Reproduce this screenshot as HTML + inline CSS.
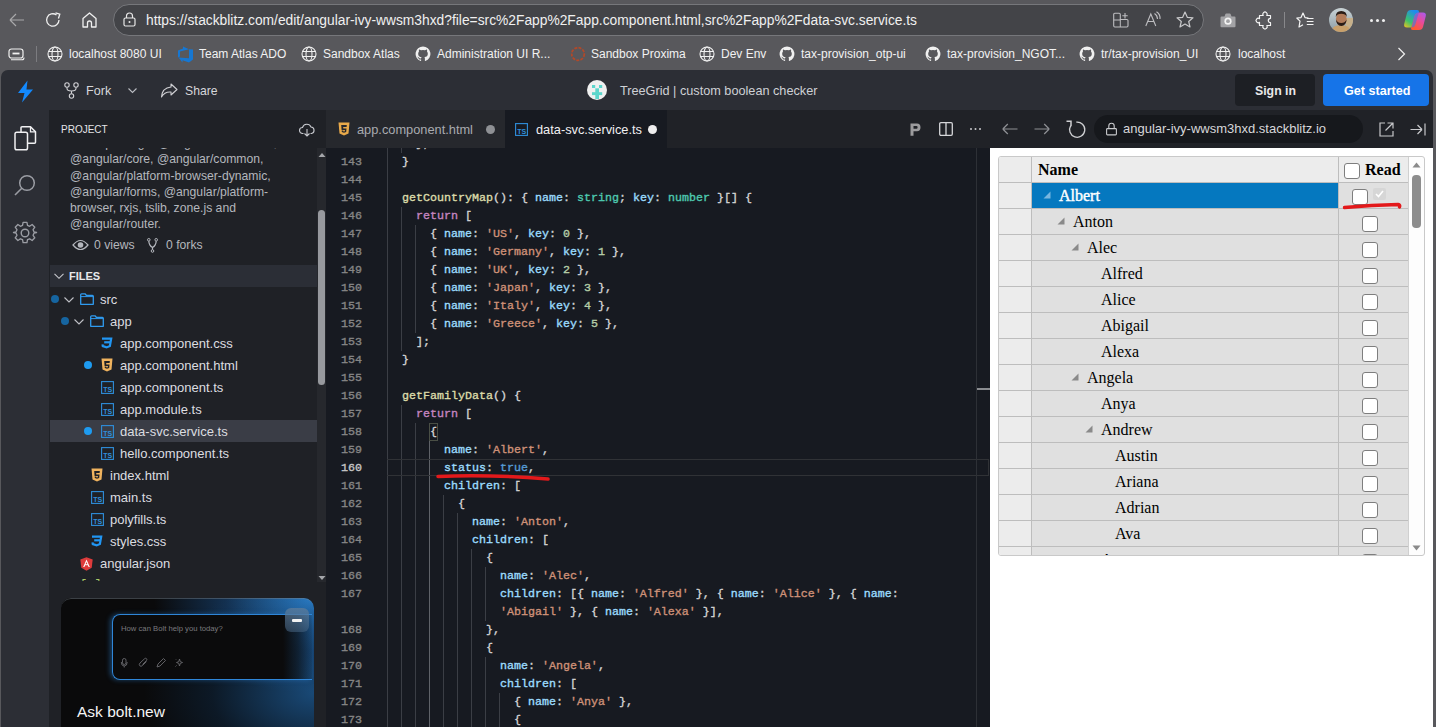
<!DOCTYPE html>
<html><head><meta charset="utf-8">
<style>
*{box-sizing:border-box;margin:0;padding:0}
html,body{width:1436px;height:727px;overflow:hidden;background:#58585c;font-family:"Liberation Sans",sans-serif}
.a{position:absolute;white-space:nowrap}
svg{position:absolute;overflow:visible}
#chrome{left:0;top:0;width:1436px;height:70px;background:#58585c}
#addr{left:113px;top:4px;width:1091px;height:32px;border-radius:16px;background:#434448;border:1px solid #76777b}
#url{left:146px;top:12px;font-size:13.8px;color:#f0f0f0;line-height:18px}
.bm{top:45px;height:18px;font-size:12px;color:#f2f2f2;line-height:18px}
.hd{top:12px;font-size:14px;color:#d6d7db;line-height:18px}
.desc{font-size:12.2px;color:#b4b7bd;line-height:16px}
.tabt{top:11px;font-size:12.8px;line-height:18px}
.gtx{font-family:"Liberation Serif",serif;font-size:16px;line-height:20px}
.cb{width:16px;height:16px;border:1.5px solid #7e7e7e;border-radius:3px;background:#fff}
.ln{-webkit-text-stroke:0.15px currentColor}
.ftx{font-size:13px;color:#dcdde0;line-height:18px}
#frame{left:1px;top:70px;width:1432px;height:657px;background:#2c2e35;border-radius:7px 7px 0 0;overflow:hidden}
#side{left:48px;top:40px;width:278px;height:617px;background:#1f2126}
#editor{left:325px;top:78px;width:665px;height:579px;background:#171a21;overflow:hidden}
#tabs{left:325px;top:40px;width:665px;height:38px;background:#202227}
#prevhdr{left:989px;top:40px;width:443px;height:38px;background:#202227}
#prev{left:989px;top:78px;width:443px;height:579px;background:#fff;overflow:hidden}
.code{font-family:"Liberation Mono",monospace;font-size:11.67px;-webkit-text-stroke:0.35px currentColor;line-height:18px;white-space:pre;color:#d4d4d4}
</style></head><body>
<div id="chrome" class="a">
  <!-- back -->
  <svg style="left:9px;top:12px" width="16" height="16" viewBox="0 0 16 16"><path d="M1 8H15M1 8L7 2M1 8L7 14" stroke="#a8a8aa" stroke-width="1.2" fill="none"/></svg>
  <!-- refresh -->
  <svg style="left:45px;top:12px" width="16" height="16" viewBox="0 0 16 16"><path d="M14 8A6.2 6.2 0 1 1 11.5 3" stroke="#f0f0f0" stroke-width="1.3" fill="none"/><path d="M10.5 0.8L14.8 2.2L13.4 6.5" stroke="#f0f0f0" stroke-width="1.3" fill="none"/></svg>
  <!-- home -->
  <svg style="left:82px;top:12px" width="15" height="16" viewBox="0 0 15 16"><path d="M1 15V6.5L7.5 1L14 6.5V15H9.5V11A2 2 0 0 0 5.5 11V15Z" stroke="#f0f0f0" stroke-width="1.3" fill="none" stroke-linejoin="round"/></svg>
  <div id="addr" class="a"></div>
  <!-- lock -->
  <svg style="left:123px;top:12px" width="13" height="15" viewBox="0 0 13 15"><rect x="1" y="6" width="11" height="8" rx="1.5" stroke="#e8e8e8" stroke-width="1.2" fill="none"/><path d="M3.5 6V4A3 3 0 0 1 9.5 4V6" stroke="#e8e8e8" stroke-width="1.2" fill="none"/><circle cx="6.5" cy="10" r="1" fill="#e8e8e8"/></svg>
  <div id="url" class="a">https://stackblitz.com/edit/angular-ivy-wwsm3hxd?file=src%2Fapp%2Fapp.component.html,src%2Fapp%2Fdata-svc.service.ts</div>
  <!-- apps + -->
  <svg style="left:1113px;top:12px" width="16" height="16" viewBox="0 0 16 16"><path d="M1.8 1.3H6.2Q7.3 1.3 7.3 2.4V7.5H13.8Q15 7.5 15 8.6V13.8Q15 15 13.8 15H1.8Q0.7 15 0.7 13.8V2.4Q0.7 1.3 1.8 1.3Z" stroke="#bdbdc0" stroke-width="1.1" fill="none"/><path d="M7.3 7.5V15M0.7 8H7.3" stroke="#bdbdc0" stroke-width="1"/><path d="M12 1V6.4M9.3 3.7H14.7" stroke="#bdbdc0" stroke-width="1.1"/></svg>
  <!-- read aloud A -->
    <svg style="left:1145px;top:11px" width="18" height="16" viewBox="0 0 18 16"><path d="M0.8 15L5.8 3L10.8 15M2.8 10.5H8.8" stroke="#bdbdc0" stroke-width="1.1" fill="none"/><path d="M9.5 2.5Q12.5 4.5 12.5 8M11.5 0.8Q15.5 3.5 15 8" stroke="#bdbdc0" stroke-width="1.1" fill="none"/></svg>
  <!-- star -->
  <svg style="left:1176px;top:11px" width="18" height="17" viewBox="0 0 18 17"><path d="M9 1L11.3 6.3L17 6.8L12.7 10.5L14 16L9 13.1L4 16L5.3 10.5L1 6.8L6.7 6.3Z" stroke="#c8c8ca" stroke-width="1.2" fill="none" stroke-linejoin="round"/></svg>
  <!-- camera -->
  <svg style="left:1220px;top:13px" width="16" height="15" viewBox="0 0 16 15"><path d="M1.5 3.5H4.5L5.3 1.3Q5.6 0.6 6.3 0.6H9.7Q10.4 0.6 10.7 1.3L11.5 3.5H14.5Q15.5 3.5 15.5 4.5V13.2Q15.5 14.2 14.5 14.2H1.5Q0.5 14.2 0.5 13.2V4.5Q0.5 3.5 1.5 3.5Z" fill="#a3a3a6"/><circle cx="8" cy="8.2" r="3.6" fill="#f4f4f4"/><circle cx="8" cy="8.2" r="1.9" fill="#a3a3a6"/></svg>
  <!-- puzzle -->
  <svg style="left:1256px;top:11px" width="17" height="18" viewBox="0 0 17 18"><path d="M3.5 4.5H7.2A2.2 2.2 0 1 1 10.8 4.5H14.5V7.3A2 2 0 1 0 14.5 11.7V14.5H10.8A2.2 2.2 0 1 1 7.2 14.5H3.5V11.3A2.2 2.2 0 1 1 3.5 7.7Z" stroke="#f4f4f4" stroke-width="1.2" fill="none" stroke-linejoin="round"/></svg>
  <div class="a" style="left:1284px;top:12px;width:1px;height:16px;background:#88888b"></div>
  <!-- favorites -->
  <svg style="left:1296px;top:12px" width="18" height="17" viewBox="0 0 18 17"><path d="M12.5 6L9 5.6L7 1L5 5.6L0.8 6L4 9.2L3 15L7 12.8" stroke="#f4f4f4" stroke-width="1.2" fill="none" stroke-linejoin="round"/><path d="M10.8 6.5H17.5M10.8 9.5H17.5M10.8 12.5H17.5" stroke="#f4f4f4" stroke-width="1.2"/></svg>
  <!-- avatar -->
  <svg style="left:1329px;top:8px" width="24" height="24" viewBox="0 0 24 24"><defs><clipPath id="avc"><circle cx="12" cy="12" r="12"/></clipPath><linearGradient id="avbg" x1="0" y1="0" x2="0" y2="1"><stop offset="0" stop-color="#c9d3d6"/><stop offset="1" stop-color="#8c9ca4"/></linearGradient></defs><g clip-path="url(#avc)"><rect width="24" height="24" fill="url(#avbg)"/><rect x="17" y="10" width="7" height="14" fill="#c7b08a"/><path d="M2 24Q3 17 12 17Q21 17 22 24Z" fill="#c9a06a"/><ellipse cx="12.3" cy="11" rx="5.4" ry="6.8" fill="#b27c5a"/><path d="M6.8 9Q6.5 3 12.3 3Q18 3 17.8 9Q16.5 5.8 12.3 5.8Q8 5.8 6.8 9Z" fill="#2b1d16"/><path d="M7 11.5Q7.5 18 12.3 18Q17 18 17.6 11.5Q16 15 12.3 15Q8.5 15 7 11.5Z" fill="#2b1d16"/></g></svg>
  <!-- dots -->
  <div class="a" style="left:1370px;top:19px;width:3px;height:3px;border-radius:2px;background:#f0f0f0;box-shadow:6px 0 #f0f0f0,12px 0 #f0f0f0"></div>
  <!-- copilot -->
  <svg style="left:1403px;top:9px" width="24" height="22" viewBox="0 0 24 22"><defs><linearGradient id="cp1" x1="0" y1="1" x2="0.6" y2="0"><stop offset="0" stop-color="#f7c21b"/><stop offset="0.4" stop-color="#3cc46a"/><stop offset="1" stop-color="#1f8af0"/></linearGradient><linearGradient id="cp2" x1="0.3" y1="1" x2="1" y2="0"><stop offset="0" stop-color="#ff5a2c"/><stop offset="0.5" stop-color="#e94a9a"/><stop offset="1" stop-color="#a45cf5"/></linearGradient></defs><path d="M8 1H14Q16.5 1 15.8 3.5L12.5 15Q11.5 18.5 8.5 18.5H4Q0.5 18.5 1.2 15L4 4Q4.8 1 8 1Z" fill="url(#cp1)"/><path d="M16 3.5H20Q23.5 3.5 22.8 7L20 18Q19.2 21 16 21H10Q7.5 21 8.2 18.5L11.5 7Q12.5 3.5 16 3.5Z" fill="url(#cp2)"/><path d="M11.5 7Q12.5 3.5 15.8 3.5L12.5 15Q11.5 18.5 8.5 18.5Z" fill="#3a7be8" opacity="0.6"/></svg>
  <!-- bookmarks -->
  <svg style="left:8px;top:48px" width="17" height="13" viewBox="0 0 17 13"><rect x="1" y="1" width="14" height="9" rx="2.5" stroke="#f0f0f0" stroke-width="1.2" fill="none"/><path d="M4.5 5.5H11.5" stroke="#f0f0f0" stroke-width="1.8"/><path d="M3 11.8H14Q16 11.8 16 9.5" stroke="#f0f0f0" stroke-width="1.1" fill="none"/></svg>
  <div class="a" style="left:36px;top:46px;width:1px;height:16px;background:#7c7c80"></div>
  <svg class="globe" style="left:47px;top:46px" width="16" height="16" viewBox="0 0 16 16"><circle cx="8" cy="8" r="7" stroke="#f0f0f0" stroke-width="1.1" fill="none"/><ellipse cx="8" cy="8" rx="3" ry="7" stroke="#f0f0f0" stroke-width="1.1" fill="none"/><path d="M1.5 5.5H14.5M1.5 10.5H14.5" stroke="#f0f0f0" stroke-width="1.1"/></svg>
  <div class="a bm" style="left:69px">localhost 8080 UI</div>
  <svg style="left:177px;top:46px" width="17" height="17" viewBox="0 0 17 17"><path d="M16 3.5V13.5L12 16.5L5.5 14.3V16.5L1.5 11.5L12 12.3V3.3ZM12 3.3L6 0.5V2.5L1 4.5V11.5L3 10.5V5.5Z" fill="#1677d2"/></svg>
  <div class="a bm" style="left:199px">Team Atlas ADO</div>
  <svg class="globe" style="left:301px;top:46px" width="16" height="16" viewBox="0 0 16 16"><circle cx="8" cy="8" r="7" stroke="#f0f0f0" stroke-width="1.1" fill="none"/><ellipse cx="8" cy="8" rx="3" ry="7" stroke="#f0f0f0" stroke-width="1.1" fill="none"/><path d="M1.5 5.5H14.5M1.5 10.5H14.5" stroke="#f0f0f0" stroke-width="1.1"/></svg>
  <div class="a bm" style="left:323px">Sandbox Atlas</div>
  <svg style="left:415px;top:46px" width="16" height="16" viewBox="0 0 16 16"><path d="M8 0.5A7.5 7.5 0 0 0 5.6 15.1C6 15.2 6.1 14.9 6.1 14.7V13.4C4 13.9 3.6 12.4 3.6 12.4C3.2 11.5 2.7 11.3 2.7 11.3C2 10.8 2.8 10.8 2.8 10.8C3.5 10.9 3.9 11.6 3.9 11.6C4.6 12.7 5.7 12.4 6.1 12.2C6.2 11.7 6.4 11.4 6.6 11.2C4.9 11 3.2 10.4 3.2 7.5C3.2 6.7 3.5 6 4 5.5C3.9 5.3 3.7 4.5 4.1 3.5C4.1 3.5 4.7 3.3 6.1 4.3A7 7 0 0 1 9.9 4.3C11.3 3.3 11.9 3.5 11.9 3.5C12.3 4.5 12.1 5.3 12 5.5C12.5 6 12.8 6.7 12.8 7.5C12.8 10.4 11.1 11 9.4 11.2C9.7 11.4 9.9 11.9 9.9 12.6V14.7C9.9 14.9 10 15.2 10.4 15.1A7.5 7.5 0 0 0 8 0.5Z" fill="#f0f0f0"/></svg>
  <div class="a bm" style="left:437px">Administration UI R...</div>
  <svg style="left:570px;top:46px" width="16" height="16" viewBox="0 0 16 16"><circle cx="8" cy="8" r="6.3" stroke="#b0492a" stroke-width="1.8" fill="none" stroke-dasharray="3 1.2"/></svg>
  <div class="a bm" style="left:591px">Sandbox Proxima</div>
  <svg class="globe" style="left:699px;top:46px" width="16" height="16" viewBox="0 0 16 16"><circle cx="8" cy="8" r="7" stroke="#f0f0f0" stroke-width="1.1" fill="none"/><ellipse cx="8" cy="8" rx="3" ry="7" stroke="#f0f0f0" stroke-width="1.1" fill="none"/><path d="M1.5 5.5H14.5M1.5 10.5H14.5" stroke="#f0f0f0" stroke-width="1.1"/></svg>
  <div class="a bm" style="left:721px">Dev Env</div>
  <svg style="left:779px;top:46px" width="16" height="16" viewBox="0 0 16 16"><path d="M8 0.5A7.5 7.5 0 0 0 5.6 15.1C6 15.2 6.1 14.9 6.1 14.7V13.4C4 13.9 3.6 12.4 3.6 12.4C3.2 11.5 2.7 11.3 2.7 11.3C2 10.8 2.8 10.8 2.8 10.8C3.5 10.9 3.9 11.6 3.9 11.6C4.6 12.7 5.7 12.4 6.1 12.2C6.2 11.7 6.4 11.4 6.6 11.2C4.9 11 3.2 10.4 3.2 7.5C3.2 6.7 3.5 6 4 5.5C3.9 5.3 3.7 4.5 4.1 3.5C4.1 3.5 4.7 3.3 6.1 4.3A7 7 0 0 1 9.9 4.3C11.3 3.3 11.9 3.5 11.9 3.5C12.3 4.5 12.1 5.3 12 5.5C12.5 6 12.8 6.7 12.8 7.5C12.8 10.4 11.1 11 9.4 11.2C9.7 11.4 9.9 11.9 9.9 12.6V14.7C9.9 14.9 10 15.2 10.4 15.1A7.5 7.5 0 0 0 8 0.5Z" fill="#f0f0f0"/></svg>
  <div class="a bm" style="left:801px">tax-provision_otp-ui</div>
  <svg style="left:925px;top:46px" width="16" height="16" viewBox="0 0 16 16"><path d="M8 0.5A7.5 7.5 0 0 0 5.6 15.1C6 15.2 6.1 14.9 6.1 14.7V13.4C4 13.9 3.6 12.4 3.6 12.4C3.2 11.5 2.7 11.3 2.7 11.3C2 10.8 2.8 10.8 2.8 10.8C3.5 10.9 3.9 11.6 3.9 11.6C4.6 12.7 5.7 12.4 6.1 12.2C6.2 11.7 6.4 11.4 6.6 11.2C4.9 11 3.2 10.4 3.2 7.5C3.2 6.7 3.5 6 4 5.5C3.9 5.3 3.7 4.5 4.1 3.5C4.1 3.5 4.7 3.3 6.1 4.3A7 7 0 0 1 9.9 4.3C11.3 3.3 11.9 3.5 11.9 3.5C12.3 4.5 12.1 5.3 12 5.5C12.5 6 12.8 6.7 12.8 7.5C12.8 10.4 11.1 11 9.4 11.2C9.7 11.4 9.9 11.9 9.9 12.6V14.7C9.9 14.9 10 15.2 10.4 15.1A7.5 7.5 0 0 0 8 0.5Z" fill="#f0f0f0"/></svg>
  <div class="a bm" style="left:947px">tax-provision_NGOT...</div>
  <svg style="left:1079px;top:46px" width="16" height="16" viewBox="0 0 16 16"><path d="M8 0.5A7.5 7.5 0 0 0 5.6 15.1C6 15.2 6.1 14.9 6.1 14.7V13.4C4 13.9 3.6 12.4 3.6 12.4C3.2 11.5 2.7 11.3 2.7 11.3C2 10.8 2.8 10.8 2.8 10.8C3.5 10.9 3.9 11.6 3.9 11.6C4.6 12.7 5.7 12.4 6.1 12.2C6.2 11.7 6.4 11.4 6.6 11.2C4.9 11 3.2 10.4 3.2 7.5C3.2 6.7 3.5 6 4 5.5C3.9 5.3 3.7 4.5 4.1 3.5C4.1 3.5 4.7 3.3 6.1 4.3A7 7 0 0 1 9.9 4.3C11.3 3.3 11.9 3.5 11.9 3.5C12.3 4.5 12.1 5.3 12 5.5C12.5 6 12.8 6.7 12.8 7.5C12.8 10.4 11.1 11 9.4 11.2C9.7 11.4 9.9 11.9 9.9 12.6V14.7C9.9 14.9 10 15.2 10.4 15.1A7.5 7.5 0 0 0 8 0.5Z" fill="#f0f0f0"/></svg>
  <div class="a bm" style="left:1101px">tr/tax-provision_UI</div>
  <svg class="globe" style="left:1215px;top:46px" width="16" height="16" viewBox="0 0 16 16"><circle cx="8" cy="8" r="7" stroke="#f0f0f0" stroke-width="1.1" fill="none"/><ellipse cx="8" cy="8" rx="3" ry="7" stroke="#f0f0f0" stroke-width="1.1" fill="none"/><path d="M1.5 5.5H14.5M1.5 10.5H14.5" stroke="#f0f0f0" stroke-width="1.1"/></svg>
  <div class="a bm" style="left:1238px">localhost</div>
  <svg style="left:1397px;top:47px" width="9" height="14" viewBox="0 0 9 14"><path d="M1.5 1L7.5 7L1.5 13" stroke="#f0f0f0" stroke-width="1.2" fill="none"/></svg>
</div>

<div id="frame" class="a">
  <!-- stackblitz header -->
  <svg style="left:16px;top:10px" width="17" height="23" viewBox="0 0 17 23"><path d="M10.5 0.5L1 13H7.5L5 22.5L16 9.5H9.5Z" fill="#1389fd"/></svg>
  <svg style="left:63px;top:12px" width="15" height="17" viewBox="0 0 15 17"><circle cx="3" cy="3" r="2.2" stroke="#d0d0d4" stroke-width="1.1" fill="none"/><circle cx="12" cy="3" r="2.2" stroke="#d0d0d4" stroke-width="1.1" fill="none"/><circle cx="7.5" cy="14" r="2.2" stroke="#d0d0d4" stroke-width="1.1" fill="none"/><path d="M3 5.2V6.5Q3 9 7.5 9Q12 9 12 6.5V5.2M7.5 9V11.8" stroke="#d0d0d4" stroke-width="1.1" fill="none"/></svg>
  <div class="a hd" style="left:85px;font-size:12.6px">Fork</div>
  <svg style="left:127px;top:18px" width="9" height="6" viewBox="0 0 9 6"><path d="M0.5 0.5L4.5 4.5L8.5 0.5" stroke="#b8bac0" stroke-width="1.1" fill="none"/></svg>
  <svg style="left:159px;top:13px" width="18" height="15" viewBox="0 0 18 15"><path d="M11 1L17 6.5L11 12V9Q4.5 8.5 1.5 14Q2 5 11 4Z" stroke="#d0d0d4" stroke-width="1.1" fill="none" stroke-linejoin="round"/></svg>
  <div class="a hd" style="left:184px;font-size:12.2px">Share</div>
  <svg style="left:586px;top:10px" width="20" height="20" viewBox="0 0 20 20"><circle cx="10" cy="10" r="10" fill="#f0f0f0"/><g fill="#5cd6cc"><rect x="5" y="5" width="3.2" height="3"/><rect x="12" y="5" width="3.2" height="3"/><rect x="8.3" y="8.3" width="3.7" height="10.7"/><rect x="5" y="12.2" width="10.2" height="2.9"/></g></svg>
  <div class="a hd" style="left:619px;font-size:12.7px;color:#cfd1d6">TreeGrid | custom boolean checker</div>
  <div class="a" style="left:1234px;top:4px;width:80px;height:32px;border-radius:4px;background:#1d1f24"></div>
  <div class="a hd" style="left:1254px;color:#e8e8ea;font-size:12.3px;font-weight:bold">Sign in</div>
  <div class="a" style="left:1322px;top:4px;width:106px;height:32px;border-radius:4px;background:#1674e8"></div>
  <div class="a hd" style="left:1343px;color:#fff;font-size:12.6px;font-weight:bold">Get started</div>

  <!-- activity bar icons -->
  <svg style="left:13px;top:56px" width="24" height="25" viewBox="0 0 24 25"><path d="M7 6V1.8Q7 0.8 8 0.8H16.5L21.5 5.8V16.3Q21.5 17.3 20.5 17.3H13.5" stroke="#f0f0f2" stroke-width="1.5" fill="none" stroke-linejoin="round"/><path d="M16.5 0.8V5.8H21.5" stroke="#f0f0f2" stroke-width="1.3" fill="none"/><rect x="1" y="6.3" width="12.5" height="17.5" rx="1.8" stroke="#f0f0f2" stroke-width="1.5" fill="none"/></svg>
  <svg style="left:13px;top:104px" width="22" height="22" viewBox="0 0 22 22"><circle cx="13" cy="9" r="7.3" stroke="#9a9ca3" stroke-width="1.5" fill="none"/><path d="M7.8 14.2L1 21" stroke="#9a9ca3" stroke-width="1.6"/></svg>
  <svg style="left:12px;top:151px" width="24" height="24" viewBox="0 0 24 24"><path d="M10 1.5H14L14.6 4.6L16.8 5.5L19.4 3.7L22.2 6.5L20.4 9.1L21.3 11.3L24 12V12V12L21.3 12.7L20.4 14.9L22.2 17.5L19.4 20.3L16.8 18.5L14.6 19.4L14 22.5H10L9.4 19.4L7.2 18.5L4.6 20.3L1.8 17.5L3.6 14.9L2.7 12.7L0 12L2.7 11.3L3.6 9.1L1.8 6.5L4.6 3.7L7.2 5.5L9.4 4.6Z" stroke="#9a9ca3" stroke-width="1.4" fill="none" stroke-linejoin="round" transform="translate(0.5 0) scale(0.96)"/><circle cx="12" cy="12" r="3.8" stroke="#9a9ca3" stroke-width="1.4" fill="none"/></svg>
  <div id="side" class="a"><div class="a" style="left:1px;top:0;width:277px;height:617px">
    <div class="a" style="left:11px;top:13px;font-size:10px;color:#e4e4e6;line-height:14px">PROJECT</div>
    <svg style="left:249px;top:13px" width="16" height="14" viewBox="0 0 16 14"><path d="M4.5 10.5H3.5A3 3 0 0 1 3.5 4.5A4.5 4.5 0 0 1 12 4A3.3 3.3 0 0 1 12.5 10.5H11.5" stroke="#c8cacf" stroke-width="1.1" fill="none"/><path d="M8 6V13M5.5 10.5L8 13L10.5 10.5" stroke="#c8cacf" stroke-width="1.1" fill="none"/></svg>
    <div class="a desc" style="left:20px;top:38px;width:246px;height:88px;overflow:hidden">
      <div style="position:absolute;top:-13px;left:0;line-height:16.25px">in this package: @angular/animations,<br>@angular/core, @angular/common,<br>@angular/platform-browser-dynamic,<br>@angular/forms, @angular/platform-<br>browser, rxjs, tslib, zone.js and<br>@angular/router.</div>
    </div>
    <svg style="left:22px;top:129px" width="17" height="12" viewBox="0 0 17 12"><path d="M1 6Q8.5 -3 16 6Q8.5 15 1 6Z" stroke="#b4b7bd" stroke-width="1.2" fill="none"/><circle cx="8.5" cy="6" r="2.8" fill="#b4b7bd"/></svg>
    <div class="a desc" style="left:44px;top:127px">0 views</div>
    <svg style="left:97px;top:128px" width="11" height="15" viewBox="0 0 11 15"><circle cx="1.8" cy="1.8" r="1.3" stroke="#b4b7bd" stroke-width="1" fill="none"/><circle cx="9.2" cy="1.8" r="1.3" stroke="#b4b7bd" stroke-width="1" fill="none"/><circle cx="5.5" cy="13" r="1.3" stroke="#b4b7bd" stroke-width="1" fill="none"/><path d="M1.8 3.1Q2 7.5 5.5 9.5Q9 7.5 9.2 3.1M5.5 9.5V11.7" stroke="#b4b7bd" stroke-width="1.2" fill="none"/></svg>
    <div class="a desc" style="left:116px;top:127px">0 forks</div>
    <!-- scrollbar -->
    <div class="a" style="left:267px;top:38px;width:10px;height:434px;background:#26282d"></div>
    <svg style="left:268px;top:42px" width="8" height="6" viewBox="0 0 8 6"><path d="M0.5 5L4 1L7.5 5Z" fill="#a4a6aa"/></svg>
    <div class="a" style="left:268px;top:100px;width:7px;height:175px;border-radius:3.5px;background:#97999e"></div>
    <svg style="left:268px;top:465px" width="8" height="6" viewBox="0 0 8 6"><path d="M0.5 1L4 5L7.5 1Z" fill="#a4a6aa"/></svg>
    <!-- FILES header -->
    <div class="a" style="left:0;top:155px;width:267px;height:22px;background:#2b2e36"></div>
    <svg style="left:4px;top:163px" width="11" height="7" viewBox="0 0 11 7"><path d="M0.5 0.8L5 5.3L9.5 0.8" stroke="#c8cacf" stroke-width="1.1" fill="none"/></svg>
    <div class="a" style="left:19px;top:158px;font-size:11px;font-weight:bold;color:#e8e8ea;line-height:16px">FILES</div>
    <!-- file tree -->
    <div class="a" style="left:0;top:177px;width:267px;height:294px;overflow:hidden">
<div class="a" style="left:1px;top:8px;width:8px;height:8px;border-radius:4px;background:#1665a0"></div>
<svg style="left:14px;top:10px" width="10" height="6" viewBox="0 0 10 6"><path d="M0.5 0.5L5 5L9.5 0.5" stroke="#c0c2c7" stroke-width="1.1" fill="none"/></svg>
<svg style="left:30px;top:6px" width="14" height="12" viewBox="0 0 14 12"><path d="M0.7 11.3V1.7Q0.7 0.8 1.6 0.8H5L6.3 2.3H12.4Q13.3 2.3 13.3 3.2V11.3Z" stroke="#2f9bf0" stroke-width="1.3" fill="none" stroke-linejoin="round"/><path d="M0.7 3.6H13.3" stroke="#2f9bf0" stroke-width="1"/></svg>
<div class="a ftx" style="left:50px;top:4px">src</div>
<div class="a" style="left:11px;top:30px;width:8px;height:8px;border-radius:4px;background:#1665a0"></div>
<svg style="left:24px;top:32px" width="10" height="6" viewBox="0 0 10 6"><path d="M0.5 0.5L5 5L9.5 0.5" stroke="#c0c2c7" stroke-width="1.1" fill="none"/></svg>
<svg style="left:40px;top:28px" width="14" height="12" viewBox="0 0 14 12"><path d="M0.7 11.3V1.7Q0.7 0.8 1.6 0.8H5L6.3 2.3H12.4Q13.3 2.3 13.3 3.2V11.3Z" stroke="#2f9bf0" stroke-width="1.3" fill="none" stroke-linejoin="round"/><path d="M0.7 3.6H13.3" stroke="#2f9bf0" stroke-width="1"/></svg>
<div class="a ftx" style="left:60px;top:26px">app</div>
<svg style="left:51px;top:50px" width="12" height="12" viewBox="0 0 12 12"><path d="M1 1.6H10.2L8.9 9L5.6 10.4L1.8 9.1L1.5 7.4" stroke="#2196f3" stroke-width="2.2" fill="none" stroke-linejoin="miter"/><path d="M3.2 5.3H9.4" stroke="#2196f3" stroke-width="2.2"/></svg>
<div class="a ftx" style="left:70px;top:48px">app.component.css</div>
<div class="a" style="left:34px;top:74px;width:8px;height:8px;border-radius:4px;background:#1e9bf0"></div>
<svg style="left:51px;top:71px" width="12" height="14" viewBox="0 0 12 14"><path d="M0.5 0.5H11.5L10.5 11.5L6 13.5L1.5 11.5Z" fill="#f0b35e"/><path d="M3.2 3H8.8L8.6 5H5.2L5.3 6.5H8.5L8.2 10L6 10.8L3.8 10L3.7 8.5H5.2L5.3 9.2L6 9.5L6.8 9.2L6.9 7.9H3.6Z" fill="#1f2126"/></svg>
<div class="a ftx" style="left:70px;top:70px">app.component.html</div>
<svg style="left:51px;top:94px" width="13" height="13" viewBox="0 0 13 13"><rect x="0.6" y="0.6" width="11.8" height="11.8" stroke="#2f8fdc" stroke-width="1.1" fill="none"/><text x="6.8" y="10.6" font-family="Liberation Sans" font-size="7" font-weight="bold" fill="#2f8fdc" text-anchor="middle">TS</text></svg>
<div class="a ftx" style="left:70px;top:92px">app.component.ts</div>
<svg style="left:51px;top:116px" width="13" height="13" viewBox="0 0 13 13"><rect x="0.6" y="0.6" width="11.8" height="11.8" stroke="#2f8fdc" stroke-width="1.1" fill="none"/><text x="6.8" y="10.6" font-family="Liberation Sans" font-size="7" font-weight="bold" fill="#2f8fdc" text-anchor="middle">TS</text></svg>
<div class="a ftx" style="left:70px;top:114px">app.module.ts</div>
<div class="a" style="left:0;top:133px;width:267px;height:22px;background:#3a3d46"></div>
<div class="a" style="left:34px;top:140px;width:8px;height:8px;border-radius:4px;background:#1e9bf0"></div>
<svg style="left:51px;top:138px" width="13" height="13" viewBox="0 0 13 13"><rect x="0.6" y="0.6" width="11.8" height="11.8" stroke="#2f8fdc" stroke-width="1.1" fill="none"/><text x="6.8" y="10.6" font-family="Liberation Sans" font-size="7" font-weight="bold" fill="#2f8fdc" text-anchor="middle">TS</text></svg>
<div class="a ftx" style="left:70px;top:136px">data-svc.service.ts</div>
<svg style="left:51px;top:160px" width="13" height="13" viewBox="0 0 13 13"><rect x="0.6" y="0.6" width="11.8" height="11.8" stroke="#2f8fdc" stroke-width="1.1" fill="none"/><text x="6.8" y="10.6" font-family="Liberation Sans" font-size="7" font-weight="bold" fill="#2f8fdc" text-anchor="middle">TS</text></svg>
<div class="a ftx" style="left:70px;top:158px">hello.component.ts</div>
<svg style="left:41px;top:181px" width="12" height="14" viewBox="0 0 12 14"><path d="M0.5 0.5H11.5L10.5 11.5L6 13.5L1.5 11.5Z" fill="#f0b35e"/><path d="M3.2 3H8.8L8.6 5H5.2L5.3 6.5H8.5L8.2 10L6 10.8L3.8 10L3.7 8.5H5.2L5.3 9.2L6 9.5L6.8 9.2L6.9 7.9H3.6Z" fill="#1f2126"/></svg>
<div class="a ftx" style="left:60px;top:180px">index.html</div>
<svg style="left:41px;top:204px" width="13" height="13" viewBox="0 0 13 13"><rect x="0.6" y="0.6" width="11.8" height="11.8" stroke="#2f8fdc" stroke-width="1.1" fill="none"/><text x="6.8" y="10.6" font-family="Liberation Sans" font-size="7" font-weight="bold" fill="#2f8fdc" text-anchor="middle">TS</text></svg>
<div class="a ftx" style="left:60px;top:202px">main.ts</div>
<svg style="left:41px;top:226px" width="13" height="13" viewBox="0 0 13 13"><rect x="0.6" y="0.6" width="11.8" height="11.8" stroke="#2f8fdc" stroke-width="1.1" fill="none"/><text x="6.8" y="10.6" font-family="Liberation Sans" font-size="7" font-weight="bold" fill="#2f8fdc" text-anchor="middle">TS</text></svg>
<div class="a ftx" style="left:60px;top:224px">polyfills.ts</div>
<svg style="left:41px;top:248px" width="12" height="12" viewBox="0 0 12 12"><path d="M1 1.6H10.2L8.9 9L5.6 10.4L1.8 9.1L1.5 7.4" stroke="#2196f3" stroke-width="2.2" fill="none" stroke-linejoin="miter"/><path d="M3.2 5.3H9.4" stroke="#2196f3" stroke-width="2.2"/></svg>
<div class="a ftx" style="left:60px;top:246px">styles.css</div>
<svg style="left:30px;top:270px" width="13" height="14" viewBox="0 0 13 14"><path d="M6.5 0.3L12.7 2.5L11.7 10.8L6.5 13.7L1.3 10.8L0.3 2.5Z" fill="#dd3b3b"/><path d="M6.5 2.5L3.2 10H4.4L5.1 8.3H7.9L8.6 10H9.8ZM5.5 7.3L6.5 4.9L7.5 7.3Z" fill="#fff"/></svg>
<div class="a ftx" style="left:50px;top:268px">angular.json</div>
<div class="a" style="left:30px;top:289px;font-family:Liberation Mono;font-size:12px;line-height:18px;color:#a8c868">[ ]</div>
<div class="a ftx" style="left:50px;top:290px">package.json</div>
</div>
    <!-- bolt card -->
    <div class="a" style="left:11px;top:488px;width:253px;height:140px;border-radius:10px 10px 0 0;background:#0a0a0b;overflow:hidden">
  <div class="a" style="left:0;top:0;width:253px;height:140px;background:radial-gradient(ellipse 160px 95px at 253px 0px,rgba(45,135,215,0.95),rgba(30,95,165,0.45) 55%,rgba(0,0,0,0) 100%)"></div>
  <div class="a" style="left:0;top:0;width:253px;height:140px;background:radial-gradient(ellipse 170px 110px at 253px 95px,rgba(35,115,190,0.6),rgba(20,70,120,0.25) 60%,rgba(0,0,0,0) 100%)"></div>
  <div class="a" style="left:0;top:0;width:253px;height:140px;border-radius:10px 10px 0 0;border-top:1px solid rgba(120,130,140,0.45)"></div>
  <div class="a" style="left:51px;top:16px;width:200px;height:66px;border-radius:8px 0 0 8px;background:linear-gradient(90deg,#0b0b0c 0,#0b0b0c 170px,rgba(11,11,12,0.6) 185px,rgba(11,11,12,0) 200px);border:1.5px solid #2f86d8;border-right:none;box-shadow:-2px 0 5px rgba(47,134,216,0.45)"></div>
  <div class="a" style="left:60px;top:26px;font-size:7.7px;color:#7a7a7e">How can Bolt help you today?</div>
  <svg style="left:59px;top:60px" width="60" height="10" viewBox="0 0 60 10"><g stroke="#6a6a6e" stroke-width="0.9" fill="none"><rect x="2.5" y="0.5" width="3.5" height="6" rx="1.7"/><path d="M1.3 4Q1.3 8 4.2 8Q7.2 8 7.2 4M4.2 8V9.5"/><path d="M26.5 3.5L22.5 7.5Q21 9 19.8 7.8Q18.6 6.6 20 5L24.5 0.8Q25.6 -0.2 26.5 0.7Q27.4 1.6 26.3 2.7L22.5 6.5"/><path d="M37 9L38 6L43.5 0.5L45.5 2.5L40 8Z"/><path d="M62.5 4.5Q59.5 4.5 59.5 1Q59.5 4.5 56.5 4.5Q59.5 4.5 59.5 8Q59.5 4.5 62.5 4.5Z"/><path d="M55.5 8.5L56.5 7.5M55.5 1L56 1.5"/></g></svg>
  <div class="a" style="left:224px;top:10px;width:24px;height:24px;border-radius:6px;background:linear-gradient(180deg,rgba(95,125,155,0.75),rgba(70,100,130,0.55))"></div>
  <div class="a" style="left:231px;top:21px;width:10px;height:2.5px;background:#f2f2f2;border-radius:1px"></div>
  <div class="a" style="left:16px;top:105px;font-size:15.5px;color:#f5f5f5;line-height:18px">Ask bolt.new</div>
</div>
  </div></div>

  <div id="tabs" class="a">
    <div class="a" style="left:0;top:0;width:179px;height:38px;background:#26282d"></div>
    <svg style="left:12px;top:12px" width="12" height="14" viewBox="0 0 12 14"><path d="M0.5 0.5H11.5L10.5 11.5L6 13.5L1.5 11.5Z" fill="#e8a94a"/><path d="M3.2 3H8.8L8.6 5H5.2L5.3 6.5H8.5L8.2 10L6 10.8L3.8 10L3.7 8.5H5.2L5.3 9.2L6 9.5L6.8 9.2L6.9 7.9H3.6Z" fill="#26282d"/></svg>
    <div class="a tabt" style="left:31px;color:#a9abb0">app.component.html</div>
    <div class="a" style="left:160px;top:15px;width:9px;height:9px;border-radius:5px;background:#8e9094"></div>
    <div class="a" style="left:179px;top:0;width:162px;height:38px;background:#171a21"></div>
    <svg style="left:189px;top:13px" width="13" height="13" viewBox="0 0 13 13"><rect x="0.6" y="0.6" width="11.8" height="11.8" stroke="#2f8fdc" stroke-width="1.1" fill="none"/><text x="6.8" y="10.6" font-family="Liberation Sans" font-size="7" font-weight="bold" fill="#2f8fdc" text-anchor="middle">TS</text></svg>
    <div class="a tabt" style="left:210px;color:#f0f0f2">data-svc.service.ts</div>
    <div class="a" style="left:322px;top:15px;width:9px;height:9px;border-radius:5px;background:#eeeeee"></div>
    <!-- toolbar icons -->
    <svg style="left:583.5px;top:13px" width="11" height="13" viewBox="0 0 11 13"><path fill-rule="evenodd" d="M0.5 0.5H7Q10.5 0.5 10.5 4.3Q10.5 8.3 7 8.3H3.5V12.8H0.5ZM3.5 3H6.5Q7.6 3 7.6 4.3Q7.6 5.8 6.5 5.8H3.5Z" fill="#9c9c9e"/></svg>
    <svg style="left:613px;top:12px" width="14" height="14" viewBox="0 0 14 14"><rect x="0.7" y="0.7" width="12.6" height="12.6" rx="1.2" stroke="#d6d7da" stroke-width="1.3" fill="none"/><path d="M7 0.7V13.3" stroke="#d6d7da" stroke-width="1.3"/></svg>
    <div class="a" style="left:644px;top:18px;width:2.4px;height:2.4px;border-radius:1px;background:#c8c9cc;box-shadow:4.5px 0 #c8c9cc,9px 0 #c8c9cc"></div>
  </div>
  <div id="prevhdr" class="a">
    <svg style="left:12px;top:13px" width="16" height="12" viewBox="0 0 16 12"><path d="M0.8 6H15.5M0.8 6L5.8 1M0.8 6L5.8 11" stroke="#8d8f93" stroke-width="1.2" fill="none"/></svg>
    <svg style="left:44px;top:13px" width="16" height="12" viewBox="0 0 16 12"><path d="M0.5 6H15.2M15.2 6L10.2 1M15.2 6L10.2 11" stroke="#8d8f93" stroke-width="1.2" fill="none"/></svg>
    <svg style="left:74px;top:9px" width="20" height="20" viewBox="0 0 20 20"><path d="M12.3 3.1A7.6 7.6 0 1 1 6.7 6.7" stroke="#cfd0d3" stroke-width="1.3" fill="none"/><path d="M2.5 2.3H7V7.3" stroke="#cfd0d3" stroke-width="1.5" fill="none"/></svg>
    <div class="a" style="left:104px;top:5px;width:269px;height:28px;border-radius:14px;background:#16181c"></div>
    <svg style="left:116px;top:13px" width="11" height="13" viewBox="0 0 11 13"><rect x="0.6" y="5.6" width="9.8" height="6.3" rx="0.8" stroke="#c8c9cc" stroke-width="1.1" fill="none"/><path d="M2.8 5.6V3A2.7 2.7 0 0 1 8.2 3V5.6" stroke="#c8c9cc" stroke-width="1.1" fill="none"/></svg>
    <div class="a" style="left:133px;top:10px;font-size:13px;color:#d6d7da;line-height:18px" id="purl">angular-ivy-wwsm3hxd.stackblitz.io</div>
    <svg style="left:389px;top:12px" width="15" height="15" viewBox="0 0 15 15"><path d="M6 1H1V14H14V9" stroke="#c8c9cc" stroke-width="1.2" fill="none"/><path d="M8.5 1H14V6.5M14 1L6.5 8.5" stroke="#c8c9cc" stroke-width="1.2" fill="none"/></svg>
    <svg style="left:420px;top:13px" width="16" height="13" viewBox="0 0 16 13"><path d="M0.5 6.5H12M12 6.5L7.5 2M12 6.5L7.5 11M15 0.5V12.5" stroke="#c8c9cc" stroke-width="1.2" fill="none"/></svg>
  </div>

  <div id="editor" class="a"><div class="a" style="left:61.0px;top:-13px;width:1px;height:18px;background:#3b3e45"></div>
<div class="a" style="left:75.0px;top:-13px;width:1px;height:18px;background:#3b3e45"></div>
<div class="a" style="left:61.0px;top:5px;width:1px;height:18px;background:#3b3e45"></div>
<div class="a" style="left:61.0px;top:23px;width:1px;height:18px;background:#3b3e45"></div>
<div class="a" style="left:61.0px;top:41px;width:1px;height:18px;background:#3b3e45"></div>
<div class="a" style="left:61.0px;top:59px;width:1px;height:18px;background:#3b3e45"></div>
<div class="a" style="left:75.0px;top:59px;width:1px;height:18px;background:#3b3e45"></div>
<div class="a" style="left:61.0px;top:77px;width:1px;height:18px;background:#3b3e45"></div>
<div class="a" style="left:75.0px;top:77px;width:1px;height:18px;background:#3b3e45"></div>
<div class="a" style="left:88.9px;top:77px;width:1px;height:18px;background:#3b3e45"></div>
<div class="a" style="left:61.0px;top:95px;width:1px;height:18px;background:#3b3e45"></div>
<div class="a" style="left:75.0px;top:95px;width:1px;height:18px;background:#3b3e45"></div>
<div class="a" style="left:88.9px;top:95px;width:1px;height:18px;background:#3b3e45"></div>
<div class="a" style="left:61.0px;top:113px;width:1px;height:18px;background:#3b3e45"></div>
<div class="a" style="left:75.0px;top:113px;width:1px;height:18px;background:#3b3e45"></div>
<div class="a" style="left:88.9px;top:113px;width:1px;height:18px;background:#3b3e45"></div>
<div class="a" style="left:61.0px;top:131px;width:1px;height:18px;background:#3b3e45"></div>
<div class="a" style="left:75.0px;top:131px;width:1px;height:18px;background:#3b3e45"></div>
<div class="a" style="left:88.9px;top:131px;width:1px;height:18px;background:#3b3e45"></div>
<div class="a" style="left:61.0px;top:149px;width:1px;height:18px;background:#3b3e45"></div>
<div class="a" style="left:75.0px;top:149px;width:1px;height:18px;background:#3b3e45"></div>
<div class="a" style="left:88.9px;top:149px;width:1px;height:18px;background:#3b3e45"></div>
<div class="a" style="left:61.0px;top:167px;width:1px;height:18px;background:#3b3e45"></div>
<div class="a" style="left:75.0px;top:167px;width:1px;height:18px;background:#3b3e45"></div>
<div class="a" style="left:88.9px;top:167px;width:1px;height:18px;background:#3b3e45"></div>
<div class="a" style="left:61.0px;top:185px;width:1px;height:18px;background:#3b3e45"></div>
<div class="a" style="left:75.0px;top:185px;width:1px;height:18px;background:#3b3e45"></div>
<div class="a" style="left:61.0px;top:203px;width:1px;height:18px;background:#3b3e45"></div>
<div class="a" style="left:61.0px;top:221px;width:1px;height:18px;background:#3b3e45"></div>
<div class="a" style="left:61.0px;top:239px;width:1px;height:18px;background:#3b3e45"></div>
<div class="a" style="left:61.0px;top:257px;width:1px;height:18px;background:#3b3e45"></div>
<div class="a" style="left:75.0px;top:257px;width:1px;height:18px;background:#3b3e45"></div>
<div class="a" style="left:61.0px;top:275px;width:1px;height:18px;background:#3b3e45"></div>
<div class="a" style="left:75.0px;top:275px;width:1px;height:18px;background:#3b3e45"></div>
<div class="a" style="left:88.9px;top:275px;width:1px;height:18px;background:#3b3e45"></div>
<div class="a" style="left:61.0px;top:293px;width:1px;height:18px;background:#3b3e45"></div>
<div class="a" style="left:75.0px;top:293px;width:1px;height:18px;background:#3b3e45"></div>
<div class="a" style="left:88.9px;top:293px;width:1px;height:18px;background:#3b3e45"></div>
<div class="a" style="left:102.9px;top:293px;width:1px;height:18px;background:#5f6268"></div>
<div class="a" style="left:61.0px;top:311px;width:1px;height:18px;background:#3b3e45"></div>
<div class="a" style="left:75.0px;top:311px;width:1px;height:18px;background:#3b3e45"></div>
<div class="a" style="left:88.9px;top:311px;width:1px;height:18px;background:#3b3e45"></div>
<div class="a" style="left:102.9px;top:311px;width:1px;height:18px;background:#5f6268"></div>
<div class="a" style="left:61.0px;top:329px;width:1px;height:18px;background:#3b3e45"></div>
<div class="a" style="left:75.0px;top:329px;width:1px;height:18px;background:#3b3e45"></div>
<div class="a" style="left:88.9px;top:329px;width:1px;height:18px;background:#3b3e45"></div>
<div class="a" style="left:102.9px;top:329px;width:1px;height:18px;background:#5f6268"></div>
<div class="a" style="left:61.0px;top:347px;width:1px;height:18px;background:#3b3e45"></div>
<div class="a" style="left:75.0px;top:347px;width:1px;height:18px;background:#3b3e45"></div>
<div class="a" style="left:88.9px;top:347px;width:1px;height:18px;background:#3b3e45"></div>
<div class="a" style="left:102.9px;top:347px;width:1px;height:18px;background:#5f6268"></div>
<div class="a" style="left:116.9px;top:347px;width:1px;height:18px;background:#3b3e45"></div>
<div class="a" style="left:61.0px;top:365px;width:1px;height:18px;background:#3b3e45"></div>
<div class="a" style="left:75.0px;top:365px;width:1px;height:18px;background:#3b3e45"></div>
<div class="a" style="left:88.9px;top:365px;width:1px;height:18px;background:#3b3e45"></div>
<div class="a" style="left:102.9px;top:365px;width:1px;height:18px;background:#5f6268"></div>
<div class="a" style="left:116.9px;top:365px;width:1px;height:18px;background:#3b3e45"></div>
<div class="a" style="left:130.9px;top:365px;width:1px;height:18px;background:#3b3e45"></div>
<div class="a" style="left:61.0px;top:383px;width:1px;height:18px;background:#3b3e45"></div>
<div class="a" style="left:75.0px;top:383px;width:1px;height:18px;background:#3b3e45"></div>
<div class="a" style="left:88.9px;top:383px;width:1px;height:18px;background:#3b3e45"></div>
<div class="a" style="left:102.9px;top:383px;width:1px;height:18px;background:#5f6268"></div>
<div class="a" style="left:116.9px;top:383px;width:1px;height:18px;background:#3b3e45"></div>
<div class="a" style="left:130.9px;top:383px;width:1px;height:18px;background:#3b3e45"></div>
<div class="a" style="left:61.0px;top:401px;width:1px;height:18px;background:#3b3e45"></div>
<div class="a" style="left:75.0px;top:401px;width:1px;height:18px;background:#3b3e45"></div>
<div class="a" style="left:88.9px;top:401px;width:1px;height:18px;background:#3b3e45"></div>
<div class="a" style="left:102.9px;top:401px;width:1px;height:18px;background:#5f6268"></div>
<div class="a" style="left:116.9px;top:401px;width:1px;height:18px;background:#3b3e45"></div>
<div class="a" style="left:130.9px;top:401px;width:1px;height:18px;background:#3b3e45"></div>
<div class="a" style="left:144.8px;top:401px;width:1px;height:18px;background:#3b3e45"></div>
<div class="a" style="left:61.0px;top:419px;width:1px;height:18px;background:#3b3e45"></div>
<div class="a" style="left:75.0px;top:419px;width:1px;height:18px;background:#3b3e45"></div>
<div class="a" style="left:88.9px;top:419px;width:1px;height:18px;background:#3b3e45"></div>
<div class="a" style="left:102.9px;top:419px;width:1px;height:18px;background:#5f6268"></div>
<div class="a" style="left:116.9px;top:419px;width:1px;height:18px;background:#3b3e45"></div>
<div class="a" style="left:130.9px;top:419px;width:1px;height:18px;background:#3b3e45"></div>
<div class="a" style="left:144.8px;top:419px;width:1px;height:18px;background:#3b3e45"></div>
<div class="a" style="left:158.8px;top:419px;width:1px;height:18px;background:#3b3e45"></div>
<div class="a" style="left:61.0px;top:437px;width:1px;height:18px;background:#3b3e45"></div>
<div class="a" style="left:75.0px;top:437px;width:1px;height:18px;background:#3b3e45"></div>
<div class="a" style="left:88.9px;top:437px;width:1px;height:18px;background:#3b3e45"></div>
<div class="a" style="left:102.9px;top:437px;width:1px;height:18px;background:#5f6268"></div>
<div class="a" style="left:116.9px;top:437px;width:1px;height:18px;background:#3b3e45"></div>
<div class="a" style="left:130.9px;top:437px;width:1px;height:18px;background:#3b3e45"></div>
<div class="a" style="left:144.8px;top:437px;width:1px;height:18px;background:#3b3e45"></div>
<div class="a" style="left:158.8px;top:437px;width:1px;height:18px;background:#3b3e45"></div>
<div class="a" style="left:61.0px;top:455px;width:1px;height:18px;background:#3b3e45"></div>
<div class="a" style="left:75.0px;top:455px;width:1px;height:18px;background:#3b3e45"></div>
<div class="a" style="left:88.9px;top:455px;width:1px;height:18px;background:#3b3e45"></div>
<div class="a" style="left:102.9px;top:455px;width:1px;height:18px;background:#5f6268"></div>
<div class="a" style="left:116.9px;top:455px;width:1px;height:18px;background:#3b3e45"></div>
<div class="a" style="left:130.9px;top:455px;width:1px;height:18px;background:#3b3e45"></div>
<div class="a" style="left:144.8px;top:455px;width:1px;height:18px;background:#3b3e45"></div>
<div class="a" style="left:158.8px;top:455px;width:1px;height:18px;background:#3b3e45"></div>
<div class="a" style="left:61.0px;top:473px;width:1px;height:18px;background:#3b3e45"></div>
<div class="a" style="left:75.0px;top:473px;width:1px;height:18px;background:#3b3e45"></div>
<div class="a" style="left:88.9px;top:473px;width:1px;height:18px;background:#3b3e45"></div>
<div class="a" style="left:102.9px;top:473px;width:1px;height:18px;background:#5f6268"></div>
<div class="a" style="left:116.9px;top:473px;width:1px;height:18px;background:#3b3e45"></div>
<div class="a" style="left:130.9px;top:473px;width:1px;height:18px;background:#3b3e45"></div>
<div class="a" style="left:144.8px;top:473px;width:1px;height:18px;background:#3b3e45"></div>
<div class="a" style="left:61.0px;top:491px;width:1px;height:18px;background:#3b3e45"></div>
<div class="a" style="left:75.0px;top:491px;width:1px;height:18px;background:#3b3e45"></div>
<div class="a" style="left:88.9px;top:491px;width:1px;height:18px;background:#3b3e45"></div>
<div class="a" style="left:102.9px;top:491px;width:1px;height:18px;background:#5f6268"></div>
<div class="a" style="left:116.9px;top:491px;width:1px;height:18px;background:#3b3e45"></div>
<div class="a" style="left:130.9px;top:491px;width:1px;height:18px;background:#3b3e45"></div>
<div class="a" style="left:144.8px;top:491px;width:1px;height:18px;background:#3b3e45"></div>
<div class="a" style="left:61.0px;top:509px;width:1px;height:18px;background:#3b3e45"></div>
<div class="a" style="left:75.0px;top:509px;width:1px;height:18px;background:#3b3e45"></div>
<div class="a" style="left:88.9px;top:509px;width:1px;height:18px;background:#3b3e45"></div>
<div class="a" style="left:102.9px;top:509px;width:1px;height:18px;background:#5f6268"></div>
<div class="a" style="left:116.9px;top:509px;width:1px;height:18px;background:#3b3e45"></div>
<div class="a" style="left:130.9px;top:509px;width:1px;height:18px;background:#3b3e45"></div>
<div class="a" style="left:144.8px;top:509px;width:1px;height:18px;background:#3b3e45"></div>
<div class="a" style="left:158.8px;top:509px;width:1px;height:18px;background:#3b3e45"></div>
<div class="a" style="left:61.0px;top:527px;width:1px;height:18px;background:#3b3e45"></div>
<div class="a" style="left:75.0px;top:527px;width:1px;height:18px;background:#3b3e45"></div>
<div class="a" style="left:88.9px;top:527px;width:1px;height:18px;background:#3b3e45"></div>
<div class="a" style="left:102.9px;top:527px;width:1px;height:18px;background:#5f6268"></div>
<div class="a" style="left:116.9px;top:527px;width:1px;height:18px;background:#3b3e45"></div>
<div class="a" style="left:130.9px;top:527px;width:1px;height:18px;background:#3b3e45"></div>
<div class="a" style="left:144.8px;top:527px;width:1px;height:18px;background:#3b3e45"></div>
<div class="a" style="left:158.8px;top:527px;width:1px;height:18px;background:#3b3e45"></div>
<div class="a" style="left:61.0px;top:545px;width:1px;height:18px;background:#3b3e45"></div>
<div class="a" style="left:75.0px;top:545px;width:1px;height:18px;background:#3b3e45"></div>
<div class="a" style="left:88.9px;top:545px;width:1px;height:18px;background:#3b3e45"></div>
<div class="a" style="left:102.9px;top:545px;width:1px;height:18px;background:#5f6268"></div>
<div class="a" style="left:116.9px;top:545px;width:1px;height:18px;background:#3b3e45"></div>
<div class="a" style="left:130.9px;top:545px;width:1px;height:18px;background:#3b3e45"></div>
<div class="a" style="left:144.8px;top:545px;width:1px;height:18px;background:#3b3e45"></div>
<div class="a" style="left:158.8px;top:545px;width:1px;height:18px;background:#3b3e45"></div>
<div class="a" style="left:172.8px;top:545px;width:1px;height:18px;background:#3b3e45"></div>
<div class="a" style="left:61.0px;top:563px;width:1px;height:18px;background:#3b3e45"></div>
<div class="a" style="left:75.0px;top:563px;width:1px;height:18px;background:#3b3e45"></div>
<div class="a" style="left:88.9px;top:563px;width:1px;height:18px;background:#3b3e45"></div>
<div class="a" style="left:102.9px;top:563px;width:1px;height:18px;background:#5f6268"></div>
<div class="a" style="left:116.9px;top:563px;width:1px;height:18px;background:#3b3e45"></div>
<div class="a" style="left:130.9px;top:563px;width:1px;height:18px;background:#3b3e45"></div>
<div class="a" style="left:144.8px;top:563px;width:1px;height:18px;background:#3b3e45"></div>
<div class="a" style="left:158.8px;top:563px;width:1px;height:18px;background:#3b3e45"></div>
<div class="a" style="left:172.8px;top:563px;width:1px;height:18px;background:#3b3e45"></div>
<div class="a" style="left:61.0px;top:581px;width:1px;height:18px;background:#3b3e45"></div>
<div class="a" style="left:75.0px;top:581px;width:1px;height:18px;background:#3b3e45"></div>
<div class="a" style="left:88.9px;top:581px;width:1px;height:18px;background:#3b3e45"></div>
<div class="a" style="left:102.9px;top:581px;width:1px;height:18px;background:#5f6268"></div>
<div class="a" style="left:116.9px;top:581px;width:1px;height:18px;background:#3b3e45"></div>
<div class="a" style="left:130.9px;top:581px;width:1px;height:18px;background:#3b3e45"></div>
<div class="a" style="left:144.8px;top:581px;width:1px;height:18px;background:#3b3e45"></div>
<div class="a" style="left:158.8px;top:581px;width:1px;height:18px;background:#3b3e45"></div>
<div class="a" style="left:172.8px;top:581px;width:1px;height:18px;background:#3b3e45"></div>
<div class="a" style="left:61px;top:311px;width:602px;height:17px;border:1px solid #303236;border-left:none"></div>
<div class="a" style="left:102.9px;top:275px;width:9.0px;height:18px;border:1px solid #4a4f45"></div>
<div class="a code ln" style="left:0;width:36px;text-align:right;top:-13px;color:#858585">142</div>
<div class="a code" style="left:62px;top:-13px">    <span style="color:#d4d4d4">}</span><span style="color:#d4d4d4">,</span></div>
<div class="a code ln" style="left:0;width:36px;text-align:right;top:5px;color:#858585">143</div>
<div class="a code" style="left:62px;top:5px">  <span style="color:#d4d4d4">}</span></div>
<div class="a code ln" style="left:0;width:36px;text-align:right;top:23px;color:#858585">144</div>
<div class="a code" style="left:62px;top:23px"></div>
<div class="a code ln" style="left:0;width:36px;text-align:right;top:41px;color:#858585">145</div>
<div class="a code" style="left:62px;top:41px">  <span style="color:#dcdcaa">getCountryMap</span><span style="color:#d4d4d4">(</span><span style="color:#d4d4d4">)</span><span style="color:#d4d4d4">:</span> <span style="color:#d4d4d4">{</span> <span style="color:#9cdcfe">name</span><span style="color:#d4d4d4">:</span> <span style="color:#4ec9b0">string</span><span style="color:#d4d4d4">;</span> <span style="color:#9cdcfe">key</span><span style="color:#d4d4d4">:</span> <span style="color:#4ec9b0">number</span> <span style="color:#d4d4d4">}</span><span style="color:#d4d4d4">[</span><span style="color:#d4d4d4">]</span> <span style="color:#d4d4d4">{</span></div>
<div class="a code ln" style="left:0;width:36px;text-align:right;top:59px;color:#858585">146</div>
<div class="a code" style="left:62px;top:59px">    <span style="color:#c586c0">return</span> <span style="color:#d4d4d4">[</span></div>
<div class="a code ln" style="left:0;width:36px;text-align:right;top:77px;color:#858585">147</div>
<div class="a code" style="left:62px;top:77px">      <span style="color:#d4d4d4">{</span> <span style="color:#9cdcfe">name</span><span style="color:#d4d4d4">:</span> <span style="color:#ce9178">&#x27;US&#x27;</span><span style="color:#d4d4d4">,</span> <span style="color:#9cdcfe">key</span><span style="color:#d4d4d4">:</span> <span style="color:#b5cea8">0</span> <span style="color:#d4d4d4">}</span><span style="color:#d4d4d4">,</span></div>
<div class="a code ln" style="left:0;width:36px;text-align:right;top:95px;color:#858585">148</div>
<div class="a code" style="left:62px;top:95px">      <span style="color:#d4d4d4">{</span> <span style="color:#9cdcfe">name</span><span style="color:#d4d4d4">:</span> <span style="color:#ce9178">&#x27;Germany&#x27;</span><span style="color:#d4d4d4">,</span> <span style="color:#9cdcfe">key</span><span style="color:#d4d4d4">:</span> <span style="color:#b5cea8">1</span> <span style="color:#d4d4d4">}</span><span style="color:#d4d4d4">,</span></div>
<div class="a code ln" style="left:0;width:36px;text-align:right;top:113px;color:#858585">149</div>
<div class="a code" style="left:62px;top:113px">      <span style="color:#d4d4d4">{</span> <span style="color:#9cdcfe">name</span><span style="color:#d4d4d4">:</span> <span style="color:#ce9178">&#x27;UK&#x27;</span><span style="color:#d4d4d4">,</span> <span style="color:#9cdcfe">key</span><span style="color:#d4d4d4">:</span> <span style="color:#b5cea8">2</span> <span style="color:#d4d4d4">}</span><span style="color:#d4d4d4">,</span></div>
<div class="a code ln" style="left:0;width:36px;text-align:right;top:131px;color:#858585">150</div>
<div class="a code" style="left:62px;top:131px">      <span style="color:#d4d4d4">{</span> <span style="color:#9cdcfe">name</span><span style="color:#d4d4d4">:</span> <span style="color:#ce9178">&#x27;Japan&#x27;</span><span style="color:#d4d4d4">,</span> <span style="color:#9cdcfe">key</span><span style="color:#d4d4d4">:</span> <span style="color:#b5cea8">3</span> <span style="color:#d4d4d4">}</span><span style="color:#d4d4d4">,</span></div>
<div class="a code ln" style="left:0;width:36px;text-align:right;top:149px;color:#858585">151</div>
<div class="a code" style="left:62px;top:149px">      <span style="color:#d4d4d4">{</span> <span style="color:#9cdcfe">name</span><span style="color:#d4d4d4">:</span> <span style="color:#ce9178">&#x27;Italy&#x27;</span><span style="color:#d4d4d4">,</span> <span style="color:#9cdcfe">key</span><span style="color:#d4d4d4">:</span> <span style="color:#b5cea8">4</span> <span style="color:#d4d4d4">}</span><span style="color:#d4d4d4">,</span></div>
<div class="a code ln" style="left:0;width:36px;text-align:right;top:167px;color:#858585">152</div>
<div class="a code" style="left:62px;top:167px">      <span style="color:#d4d4d4">{</span> <span style="color:#9cdcfe">name</span><span style="color:#d4d4d4">:</span> <span style="color:#ce9178">&#x27;Greece&#x27;</span><span style="color:#d4d4d4">,</span> <span style="color:#9cdcfe">key</span><span style="color:#d4d4d4">:</span> <span style="color:#b5cea8">5</span> <span style="color:#d4d4d4">}</span><span style="color:#d4d4d4">,</span></div>
<div class="a code ln" style="left:0;width:36px;text-align:right;top:185px;color:#858585">153</div>
<div class="a code" style="left:62px;top:185px">    <span style="color:#d4d4d4">]</span><span style="color:#d4d4d4">;</span></div>
<div class="a code ln" style="left:0;width:36px;text-align:right;top:203px;color:#858585">154</div>
<div class="a code" style="left:62px;top:203px">  <span style="color:#d4d4d4">}</span></div>
<div class="a code ln" style="left:0;width:36px;text-align:right;top:221px;color:#858585">155</div>
<div class="a code" style="left:62px;top:221px"></div>
<div class="a code ln" style="left:0;width:36px;text-align:right;top:239px;color:#858585">156</div>
<div class="a code" style="left:62px;top:239px">  <span style="color:#dcdcaa">getFamilyData</span><span style="color:#d4d4d4">(</span><span style="color:#d4d4d4">)</span> <span style="color:#d4d4d4">{</span></div>
<div class="a code ln" style="left:0;width:36px;text-align:right;top:257px;color:#858585">157</div>
<div class="a code" style="left:62px;top:257px">    <span style="color:#c586c0">return</span> <span style="color:#d4d4d4">[</span></div>
<div class="a code ln" style="left:0;width:36px;text-align:right;top:275px;color:#858585">158</div>
<div class="a code" style="left:62px;top:275px">      <span style="color:#d4d4d4">{</span></div>
<div class="a code ln" style="left:0;width:36px;text-align:right;top:293px;color:#858585">159</div>
<div class="a code" style="left:62px;top:293px">        <span style="color:#9cdcfe">name</span><span style="color:#d4d4d4">:</span> <span style="color:#ce9178">&#x27;Albert&#x27;</span><span style="color:#d4d4d4">,</span></div>
<div class="a code ln" style="left:0;width:36px;text-align:right;top:311px;color:#c6c6c6">160</div>
<div class="a code" style="left:62px;top:311px">        <span style="color:#9cdcfe">status</span><span style="color:#d4d4d4">:</span> <span style="color:#569cd6">true</span><span style="color:#d4d4d4">,</span></div>
<div class="a code ln" style="left:0;width:36px;text-align:right;top:329px;color:#858585">161</div>
<div class="a code" style="left:62px;top:329px">        <span style="color:#9cdcfe">children</span><span style="color:#d4d4d4">:</span> <span style="color:#d4d4d4">[</span></div>
<div class="a code ln" style="left:0;width:36px;text-align:right;top:347px;color:#858585">162</div>
<div class="a code" style="left:62px;top:347px">          <span style="color:#d4d4d4">{</span></div>
<div class="a code ln" style="left:0;width:36px;text-align:right;top:365px;color:#858585">163</div>
<div class="a code" style="left:62px;top:365px">            <span style="color:#9cdcfe">name</span><span style="color:#d4d4d4">:</span> <span style="color:#ce9178">&#x27;Anton&#x27;</span><span style="color:#d4d4d4">,</span></div>
<div class="a code ln" style="left:0;width:36px;text-align:right;top:383px;color:#858585">164</div>
<div class="a code" style="left:62px;top:383px">            <span style="color:#9cdcfe">children</span><span style="color:#d4d4d4">:</span> <span style="color:#d4d4d4">[</span></div>
<div class="a code ln" style="left:0;width:36px;text-align:right;top:401px;color:#858585">165</div>
<div class="a code" style="left:62px;top:401px">              <span style="color:#d4d4d4">{</span></div>
<div class="a code ln" style="left:0;width:36px;text-align:right;top:419px;color:#858585">166</div>
<div class="a code" style="left:62px;top:419px">                <span style="color:#9cdcfe">name</span><span style="color:#d4d4d4">:</span> <span style="color:#ce9178">&#x27;Alec&#x27;</span><span style="color:#d4d4d4">,</span></div>
<div class="a code ln" style="left:0;width:36px;text-align:right;top:437px;color:#858585">167</div>
<div class="a code" style="left:62px;top:437px">                <span style="color:#9cdcfe">children</span><span style="color:#d4d4d4">:</span> <span style="color:#d4d4d4">[</span><span style="color:#d4d4d4">{</span> <span style="color:#9cdcfe">name</span><span style="color:#d4d4d4">:</span> <span style="color:#ce9178">&#x27;Alfred&#x27;</span> <span style="color:#d4d4d4">}</span><span style="color:#d4d4d4">,</span> <span style="color:#d4d4d4">{</span> <span style="color:#9cdcfe">name</span><span style="color:#d4d4d4">:</span> <span style="color:#ce9178">&#x27;Alice&#x27;</span> <span style="color:#d4d4d4">}</span><span style="color:#d4d4d4">,</span> <span style="color:#d4d4d4">{</span> <span style="color:#9cdcfe">name</span><span style="color:#d4d4d4">:</span></div>
<div class="a code" style="left:62px;top:455px">                <span style="color:#ce9178">&#x27;Abigail&#x27;</span> <span style="color:#d4d4d4">}</span><span style="color:#d4d4d4">,</span> <span style="color:#d4d4d4">{</span> <span style="color:#9cdcfe">name</span><span style="color:#d4d4d4">:</span> <span style="color:#ce9178">&#x27;Alexa&#x27;</span> <span style="color:#d4d4d4">}</span><span style="color:#d4d4d4">]</span><span style="color:#d4d4d4">,</span></div>
<div class="a code ln" style="left:0;width:36px;text-align:right;top:473px;color:#858585">168</div>
<div class="a code" style="left:62px;top:473px">              <span style="color:#d4d4d4">}</span><span style="color:#d4d4d4">,</span></div>
<div class="a code ln" style="left:0;width:36px;text-align:right;top:491px;color:#858585">169</div>
<div class="a code" style="left:62px;top:491px">              <span style="color:#d4d4d4">{</span></div>
<div class="a code ln" style="left:0;width:36px;text-align:right;top:509px;color:#858585">170</div>
<div class="a code" style="left:62px;top:509px">                <span style="color:#9cdcfe">name</span><span style="color:#d4d4d4">:</span> <span style="color:#ce9178">&#x27;Angela&#x27;</span><span style="color:#d4d4d4">,</span></div>
<div class="a code ln" style="left:0;width:36px;text-align:right;top:527px;color:#858585">171</div>
<div class="a code" style="left:62px;top:527px">                <span style="color:#9cdcfe">children</span><span style="color:#d4d4d4">:</span> <span style="color:#d4d4d4">[</span></div>
<div class="a code ln" style="left:0;width:36px;text-align:right;top:545px;color:#858585">172</div>
<div class="a code" style="left:62px;top:545px">                  <span style="color:#d4d4d4">{</span> <span style="color:#9cdcfe">name</span><span style="color:#d4d4d4">:</span> <span style="color:#ce9178">&#x27;Anya&#x27;</span> <span style="color:#d4d4d4">}</span><span style="color:#d4d4d4">,</span></div>
<div class="a code ln" style="left:0;width:36px;text-align:right;top:563px;color:#858585">173</div>
<div class="a code" style="left:62px;top:563px">                  <span style="color:#d4d4d4">{</span></div>
<div class="a code ln" style="left:0;width:36px;text-align:right;top:581px;color:#858585">174</div>
<div class="a code" style="left:62px;top:581px">                    <span style="color:#9cdcfe">name</span><span style="color:#d4d4d4">:</span> <span style="color:#ce9178">&#x27;Andrew&#x27;</span><span style="color:#d4d4d4">,</span></div>
<div class="a" style="left:650px;top:0;width:1px;height:579px;background:#2d3036"></div>
<div class="a" style="left:651px;top:240px;width:13px;height:2px;background:#8a8c90"></div>
<svg style="left:0;top:0" width="665" height="579" viewBox="0 0 665 579"><path d="M112 328.5Q160 326 222 331" stroke="#e3191b" stroke-width="3.5" fill="none" stroke-linecap="round"/></svg></div>
  <div id="prev" class="a"><div class="a" style="left:8px;top:8px;width:427px;height:400px;border:1px solid #c9c9c9;border-radius:3px;background:#fdfdfd;overflow:hidden">
<div class="a" style="left:0px;top:0px;width:409px;height:25px;background:#ececec"></div>
<div class="a" style="left:0px;top:25px;width:32px;height:26px;background:#ececec"></div>
<div class="a" style="left:32px;top:25px;width:377px;height:26px;background:#e0e0e0"></div>
<div class="a" style="left:32px;top:25px;width:308px;height:26px;background:#0578bf"></div>
<div class="a" style="left:0px;top:25px;width:409px;height:1px;background:#bdbdbd"></div>
<svg style="left:44px;top:34px" width="8" height="8" viewBox="0 0 8 8"><path d="M7.5 0.5V7.5H0.5Z" fill="#78b6e0"/></svg>
<div class="a gtx" style="left:60px;top:29px;color:#fff;-webkit-text-stroke:0.45px #fff">Albert</div>
<div class="a cb" style="left:353px;top:32px"></div>
<div class="a" style="left:374px;top:31px;width:13px;height:12px;border-radius:2px;background:#d6d6d6"></div>
<svg style="left:376px;top:33px" width="9" height="8" viewBox="0 0 9 8"><path d="M1 4L3.5 6.5L8 1" stroke="#fff" stroke-width="1.6" fill="none"/></svg>
<div class="a" style="left:0px;top:51px;width:32px;height:26px;background:#ececec"></div>
<div class="a" style="left:32px;top:51px;width:377px;height:26px;background:#e0e0e0"></div>
<div class="a" style="left:0px;top:51px;width:409px;height:1px;background:#bdbdbd"></div>
<svg style="left:58px;top:60px" width="8" height="8" viewBox="0 0 8 8"><path d="M7.5 0.5V7.5H0.5Z" fill="#8a8a8a"/></svg>
<div class="a gtx" style="left:74px;top:55px;color:#000">Anton</div>
<div class="a cb" style="left:363px;top:59px"></div>
<div class="a" style="left:0px;top:77px;width:32px;height:26px;background:#ececec"></div>
<div class="a" style="left:32px;top:77px;width:377px;height:26px;background:#e0e0e0"></div>
<div class="a" style="left:0px;top:77px;width:409px;height:1px;background:#bdbdbd"></div>
<svg style="left:72px;top:86px" width="8" height="8" viewBox="0 0 8 8"><path d="M7.5 0.5V7.5H0.5Z" fill="#8a8a8a"/></svg>
<div class="a gtx" style="left:88px;top:81px;color:#000">Alec</div>
<div class="a cb" style="left:363px;top:85px"></div>
<div class="a" style="left:0px;top:103px;width:32px;height:26px;background:#ececec"></div>
<div class="a" style="left:32px;top:103px;width:377px;height:26px;background:#e0e0e0"></div>
<div class="a" style="left:0px;top:103px;width:409px;height:1px;background:#bdbdbd"></div>
<div class="a gtx" style="left:102px;top:107px;color:#000">Alfred</div>
<div class="a cb" style="left:363px;top:111px"></div>
<div class="a" style="left:0px;top:129px;width:32px;height:26px;background:#ececec"></div>
<div class="a" style="left:32px;top:129px;width:377px;height:26px;background:#e0e0e0"></div>
<div class="a" style="left:0px;top:129px;width:409px;height:1px;background:#bdbdbd"></div>
<div class="a gtx" style="left:102px;top:133px;color:#000">Alice</div>
<div class="a cb" style="left:363px;top:137px"></div>
<div class="a" style="left:0px;top:155px;width:32px;height:26px;background:#ececec"></div>
<div class="a" style="left:32px;top:155px;width:377px;height:26px;background:#e0e0e0"></div>
<div class="a" style="left:0px;top:155px;width:409px;height:1px;background:#bdbdbd"></div>
<div class="a gtx" style="left:102px;top:159px;color:#000">Abigail</div>
<div class="a cb" style="left:363px;top:163px"></div>
<div class="a" style="left:0px;top:181px;width:32px;height:26px;background:#ececec"></div>
<div class="a" style="left:32px;top:181px;width:377px;height:26px;background:#e0e0e0"></div>
<div class="a" style="left:0px;top:181px;width:409px;height:1px;background:#bdbdbd"></div>
<div class="a gtx" style="left:102px;top:185px;color:#000">Alexa</div>
<div class="a cb" style="left:363px;top:189px"></div>
<div class="a" style="left:0px;top:207px;width:32px;height:26px;background:#ececec"></div>
<div class="a" style="left:32px;top:207px;width:377px;height:26px;background:#e0e0e0"></div>
<div class="a" style="left:0px;top:207px;width:409px;height:1px;background:#bdbdbd"></div>
<svg style="left:72px;top:216px" width="8" height="8" viewBox="0 0 8 8"><path d="M7.5 0.5V7.5H0.5Z" fill="#8a8a8a"/></svg>
<div class="a gtx" style="left:88px;top:211px;color:#000">Angela</div>
<div class="a cb" style="left:363px;top:215px"></div>
<div class="a" style="left:0px;top:233px;width:32px;height:26px;background:#ececec"></div>
<div class="a" style="left:32px;top:233px;width:377px;height:26px;background:#e0e0e0"></div>
<div class="a" style="left:0px;top:233px;width:409px;height:1px;background:#bdbdbd"></div>
<div class="a gtx" style="left:102px;top:237px;color:#000">Anya</div>
<div class="a cb" style="left:363px;top:241px"></div>
<div class="a" style="left:0px;top:259px;width:32px;height:26px;background:#ececec"></div>
<div class="a" style="left:32px;top:259px;width:377px;height:26px;background:#e0e0e0"></div>
<div class="a" style="left:0px;top:259px;width:409px;height:1px;background:#bdbdbd"></div>
<svg style="left:86px;top:268px" width="8" height="8" viewBox="0 0 8 8"><path d="M7.5 0.5V7.5H0.5Z" fill="#8a8a8a"/></svg>
<div class="a gtx" style="left:102px;top:263px;color:#000">Andrew</div>
<div class="a cb" style="left:363px;top:267px"></div>
<div class="a" style="left:0px;top:285px;width:32px;height:26px;background:#ececec"></div>
<div class="a" style="left:32px;top:285px;width:377px;height:26px;background:#e0e0e0"></div>
<div class="a" style="left:0px;top:285px;width:409px;height:1px;background:#bdbdbd"></div>
<div class="a gtx" style="left:116px;top:289px;color:#000">Austin</div>
<div class="a cb" style="left:363px;top:293px"></div>
<div class="a" style="left:0px;top:311px;width:32px;height:26px;background:#ececec"></div>
<div class="a" style="left:32px;top:311px;width:377px;height:26px;background:#e0e0e0"></div>
<div class="a" style="left:0px;top:311px;width:409px;height:1px;background:#bdbdbd"></div>
<div class="a gtx" style="left:116px;top:315px;color:#000">Ariana</div>
<div class="a cb" style="left:363px;top:319px"></div>
<div class="a" style="left:0px;top:337px;width:32px;height:26px;background:#ececec"></div>
<div class="a" style="left:32px;top:337px;width:377px;height:26px;background:#e0e0e0"></div>
<div class="a" style="left:0px;top:337px;width:409px;height:1px;background:#bdbdbd"></div>
<div class="a gtx" style="left:116px;top:341px;color:#000">Adrian</div>
<div class="a cb" style="left:363px;top:345px"></div>
<div class="a" style="left:0px;top:363px;width:32px;height:26px;background:#ececec"></div>
<div class="a" style="left:32px;top:363px;width:377px;height:26px;background:#e0e0e0"></div>
<div class="a" style="left:0px;top:363px;width:409px;height:1px;background:#bdbdbd"></div>
<div class="a gtx" style="left:116px;top:367px;color:#000">Ava</div>
<div class="a cb" style="left:363px;top:371px"></div>
<div class="a" style="left:0px;top:389px;width:32px;height:26px;background:#ececec"></div>
<div class="a" style="left:32px;top:389px;width:377px;height:26px;background:#e0e0e0"></div>
<div class="a" style="left:0px;top:389px;width:409px;height:1px;background:#bdbdbd"></div>
<div class="a gtx" style="left:102px;top:393px;color:#000">Anna</div>
<div class="a cb" style="left:363px;top:397px"></div>
<div class="a" style="left:32px;top:0px;width:1px;height:400px;background:#bdbdbd"></div>
<div class="a" style="left:339px;top:0px;width:1px;height:400px;background:#bdbdbd"></div>
<div class="a" style="left:409px;top:0px;width:1px;height:400px;background:#d0d0d0"></div>
<div class="a gtx" style="left:39px;top:3px;font-weight:bold">Name</div>
<div class="a cb" style="left:345px;top:6px"></div>
<div class="a gtx" style="left:366px;top:3px;font-weight:bold">Read</div>
<svg style="left:413px;top:5px" width="9" height="6" viewBox="0 0 9 6"><path d="M0.5 5.5L4.5 0.5L8.5 5.5Z" fill="#8a8a8a"/></svg>
<div class="a" style="left:413px;top:18px;width:9px;height:53px;background:#8d8d8d;border-radius:4px"></div>
<svg style="left:413px;top:388px" width="9" height="6" viewBox="0 0 9 6"><path d="M0.5 0.5L4.5 5.5L8.5 0.5Z" fill="#8a8a8a"/></svg>
</div>
<svg style="left:0;top:0" width="446" height="579" viewBox="0 0 446 579"><path d="M354.5 59.5Q382 57 408 56.5Q410.5 57 409.5 59" stroke="#e3191b" stroke-width="3.4" fill="none" stroke-linecap="round" stroke-linejoin="round"/></svg></div>
</div>
</body></html>
